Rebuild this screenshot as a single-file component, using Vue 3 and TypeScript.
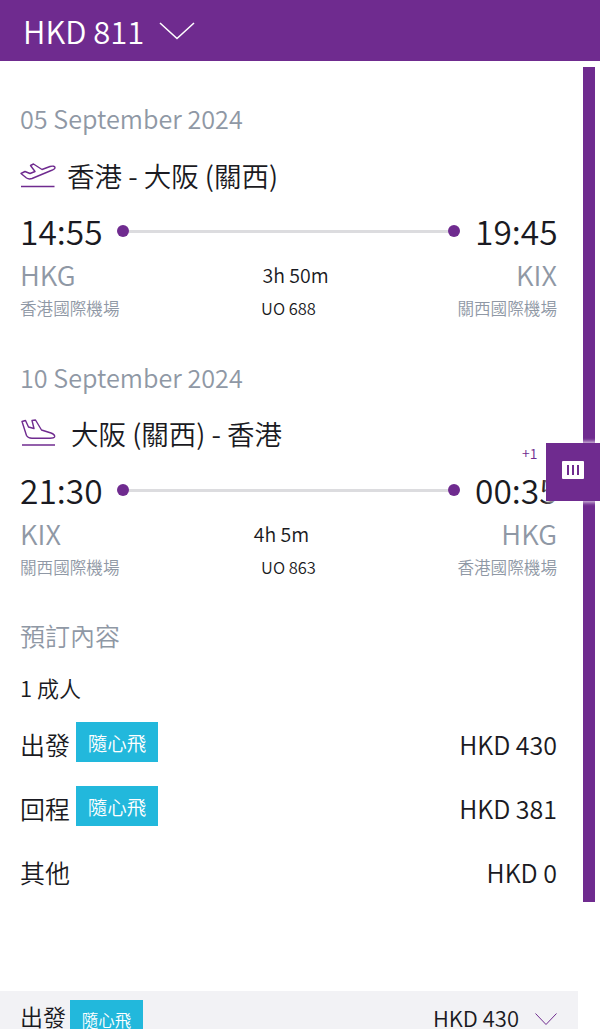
<script setup lang="ts">
interface Leg {
  date: string
  route: string
  from: string
  fromName: string
  to: string
  toName: string
  depart: string
  arrive: string
  duration: string
  flight: string
  inbound: boolean
}

const legs: Leg[] = [
  {
    date: '05 September 2024',
    route: '香港 - 大阪 (關西)',
    from: 'HKG',
    fromName: '香港國際機場',
    to: 'KIX',
    toName: '關西國際機場',
    depart: '14:55',
    arrive: '19:45',
    duration: '3h 50m',
    flight: 'UO 688',
    inbound: false,
  },
  {
    date: '10 September 2024',
    route: '大阪 (關西) - 香港',
    from: 'KIX',
    fromName: '關西國際機場',
    to: 'HKG',
    toName: '香港國際機場',
    depart: '21:30',
    arrive: '00:35',
    duration: '4h 5m',
    flight: 'UO 863',
    inbound: true,
  },
]

const fares = [
  { label: '出發', badge: '隨心飛', price: 'HKD 430' },
  { label: '回程', badge: '隨心飛', price: 'HKD 381' },
  { label: '其他', badge: '', price: 'HKD 0' },
]
</script>

<template>
  <div class="Page">
    <header class="Header">
      <span class="Header__total">HKD 811</span>
      <svg class="Header__arrow" width="36" height="18" viewBox="0 0 36 18" fill="none">
        <path d="M1 1L18 16.5L35 1" stroke="#fff" stroke-width="1.6" />
      </svg>
    </header>

    <main class="Content">
      <section v-for="leg in legs" :key="leg.flight" class="Leg">
        <div class="Leg__date">{{ leg.date }}</div>

        <div class="Leg__route" :class="{ 'Leg__route--inbound': leg.inbound }">
          <svg v-if="!leg.inbound" width="36" height="28" viewBox="0 0 36 28" fill="none" stroke="#6f2b8f" stroke-width="1.4" stroke-linejoin="round">
            <path d="M1 12.5L5 10.5L10 12.5L15 10.5L10.5 4.5L13.5 3L22 8.5L30 5.5C33 4.5 35 5.5 35 6.8C35 8 33 9 30 10L12 17.5C10 18.2 8 18 6.5 17L1 12.5Z" />
            <path d="M1 25.5H34.5" stroke-width="1.6" />
          </svg>
          <svg v-else width="36" height="28" viewBox="0 0 36 28" fill="none" stroke="#6f2b8f" stroke-width="1.4" stroke-linejoin="round">
            <path d="M2 2.5L5.5 1.5L8.5 8L14 9.5L12 1.5L15.5 1L21.5 11L31 14C34 15 35 16.5 34.5 18C34 19 32.5 19.2 30 19.2H12C9 19.2 7.5 18.5 6.5 16.5L2 2.5Z" />
            <path d="M2 26H35" stroke-width="1.6" />
          </svg>
          <span>{{ leg.route }}</span>
        </div>

        <div class="Leg__times">
          <span class="Leg__time">{{ leg.depart }}</span>
          <div class="Leg__line">
            <i class="Leg__dot"></i>
            <i class="Leg__track"></i>
            <i class="Leg__dot"></i>
          </div>
          <span class="Leg__time">{{ leg.arrive }}</span>
        </div>

        <div class="Leg__info">
          <span class="Leg__code">{{ leg.from }}</span>
          <span class="Leg__duration" :class="leg.inbound ? 'Leg__duration--in' : 'Leg__duration--out'">{{ leg.duration }}</span>
          <span class="Leg__code Leg__end">{{ leg.to }}</span>
          <span class="Leg__name">{{ leg.fromName }}</span>
          <span class="Leg__flight">{{ leg.flight }}</span>
          <span class="Leg__name Leg__end">{{ leg.toName }}</span>
        </div>
      </section>

      <section class="Summary">
        <div class="Summary__title">預訂內容</div>
        <div class="Summary__pax">1 成人</div>
        <div class="Summary__fares">
          <div v-for="fare in fares" :key="fare.label" class="Fare">
            <span class="Fare__label">{{ fare.label }}</span>
            <span v-if="fare.badge" class="Fare__badge">{{ fare.badge }}</span>
            <span class="Fare__price">{{ fare.price }}</span>
          </div>
        </div>
      </section>

      <div class="Bottom">
        <span class="Bottom__label">出發</span>
        <span class="Bottom__badge">隨心飛</span>
        <span class="Bottom__price">HKD 430</span>
        <svg width="22" height="13" viewBox="0 0 22 13" fill="none">
          <path d="M0.5 0.5L11 11.5L21.5 0.5" stroke="#6f2b8f" stroke-width="1" />
        </svg>
      </div>
    </main>

    <div class="Scrollbar"></div>
    <span class="NextDay">+1</span>
    <div class="Handle">
      <div class="Handle__icon"><i></i><i></i><i></i></div>
    </div>
  </div>
</template>

<style>
html,
body {
  margin: 0;
  background: #fff;
}
</style>

<style scoped>
.Page {
  position: relative;
  width: 600px;
  height: 1029px;
  overflow: hidden;
  background: #fff;
  color: #1a1a22;
  font-family: "Noto Sans CJK TC", "Noto Sans", sans-serif;
  font-weight: 350;
}

.Header {
  display: flex;
  align-items: center;
  gap: 15px;
  height: 61px;
  padding: 0 23px;
  box-sizing: border-box;
  background: #6f2b8f;
  color: #fff;
}

.Header__total {
  font-size: 31px;
  line-height: 1;
}

.Content {
  width: 578px;
  padding: 39px 0 0 20px;
  box-sizing: border-box;
}

.Leg {
  width: 537px;
  height: 259px;
}

.Leg__date {
  height: 36px;
  color: #8f98a5;
  font-size: 25.2px;
  line-height: 36px;
}

.Leg__route {
  display: flex;
  align-items: center;
  gap: 11px;
  height: 40px;
  margin-top: 19px;
  font-size: 27.5px;
  line-height: 40px;
}

.Leg__route--inbound {
  gap: 15px;
  margin-top: 18px;
  margin-bottom: 17px;
}

.Leg__route--inbound + .Leg__times {
  margin-top: 0;
}

.Leg__times {
  display: flex;
  align-items: center;
  justify-content: space-between;
  height: 44px;
  margin-top: 16px;
}

.Leg__time {
  width: 82px;
  margin-bottom: 4px;
  font-size: 33.5px;
  line-height: 44px;
  white-space: nowrap;
}

.Leg__line {
  display: flex;
  align-items: center;
  width: 343px;
  margin: 0 auto 4px 15px;
}

.Leg__dot {
  flex: none;
  width: 12px;
  height: 12px;
  border-radius: 50%;
  background: #6f2b8f;
}

.Leg__track {
  flex: 1;
  height: 3px;
  background: #dcdcdf;
}

.Leg__info {
  display: grid;
  grid-template-columns: 1fr auto 1fr;
  grid-template-rows: 40px 27px;
  align-items: center;
}

.Leg__code {
  color: #8f98a5;
  font-size: 27.5px;
  line-height: 1;
}

.Leg__duration {
  font-size: 19.5px;
  line-height: 1;
}

.Leg__duration--out {
  padding-left: 14px;
}

.Leg__duration--in {
  padding-right: 14px;
}

.Leg__name {
  color: #8f98a5;
  font-size: 16.6px;
  line-height: 1;
}

.Leg__flight {
  font-size: 16.5px;
  line-height: 1;
  text-align: center;
}

.Leg__end {
  text-align: right;
}

.Summary {
  width: 537px;
  margin-top: -1px;
}

.Summary__title {
  color: #8f98a5;
  font-size: 25px;
  line-height: 36px;
}

.Summary__pax {
  margin-top: 19px;
  font-size: 22px;
  line-height: 30px;
}

.Summary__fares {
  margin-top: 11px;
}

.Fare {
  display: flex;
  height: 64px;
  align-items: center;
  font-size: 25px;
}

.Fare__label {
  margin-bottom: 2px;
  line-height: 1;
}

.Fare__badge {
  display: flex;
  align-items: center;
  justify-content: center;
  width: 82px;
  height: 40px;
  margin: -6px 0 0 6px;
  background: #22b8dc;
  color: #fff;
  font-size: 19.5px;
}

.Fare__price {
  margin: 0 0 2px auto;
  line-height: 1;
}

.Bottom {
  display: flex;
  align-items: flex-start;
  height: 60px;
  margin: 86px 0 0 -20px;
  padding: 9px 21px 0 20px;
  box-sizing: border-box;
  background: #f2f2f5;
}

.Bottom__label {
  margin-top: 5px;
  font-size: 23px;
  line-height: 1;
}

.Bottom__badge {
  display: flex;
  align-items: center;
  justify-content: center;
  width: 73px;
  height: 40px;
  margin-left: 4px;
  background: #22b8dc;
  color: #fff;
  font-size: 16.5px;
}

.Bottom__price {
  margin: 6px 16px 0 auto;
  font-size: 22px;
  line-height: 1;
}

.Bottom svg {
  margin-top: 13px;
}

.Scrollbar {
  position: absolute;
  top: 67px;
  left: 583px;
  width: 12px;
  height: 835px;
  background: #6f2b8f;
}

.NextDay {
  position: absolute;
  top: 445px;
  left: 522px;
  color: #6f2b8f;
  font-size: 14px;
  line-height: 16px;
}

.Handle {
  position: absolute;
  top: 443px;
  left: 546px;
  display: flex;
  align-items: center;
  justify-content: center;
  width: 54px;
  height: 58px;
  background: #6f2b8f;
  box-shadow: 0 -2px 3px rgba(255, 255, 255, 0.6), 0 2px 3px rgba(255, 255, 255, 0.6);
}

.Handle__icon {
  display: flex;
  align-items: center;
  justify-content: center;
  gap: 3px;
  width: 22px;
  height: 18px;
  margin-bottom: 4px;
  border-radius: 1px;
  background: #fff;
}

.Handle__icon i {
  width: 2px;
  height: 10px;
  background: #6f2b8f;
}
</style>
